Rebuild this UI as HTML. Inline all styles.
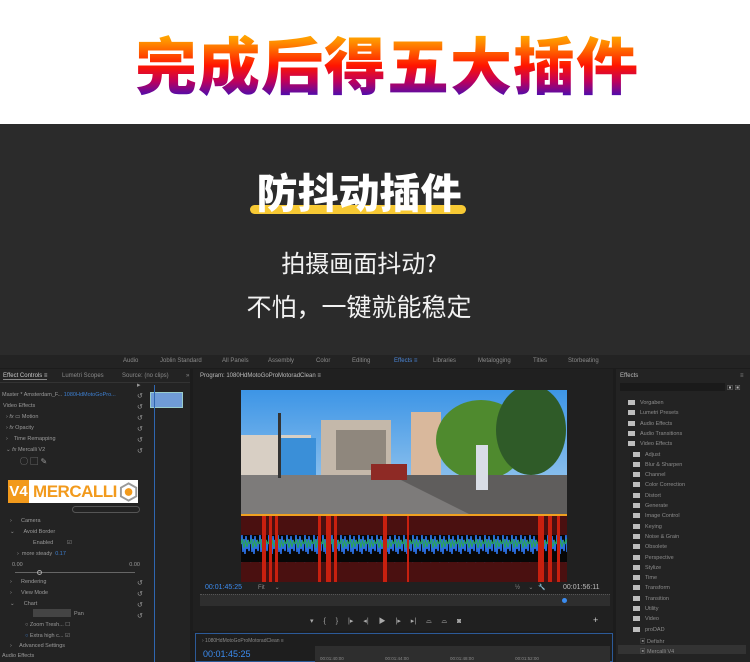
<!DOCTYPE html>
<html><head><meta charset="utf-8">
<style>
*{margin:0;padding:0;box-sizing:border-box}
body{width:750px;height:662px;overflow:hidden;background:#fff;font-family:"Liberation Sans","Noto Sans CJK SC",sans-serif;position:relative}
.abs{position:absolute}
#title{left:12px;width:750px;top:24px;text-align:center;font:900 62px/76px "Noto Sans CJK SC",sans-serif;letter-spacing:1px;background:linear-gradient(180deg,#ffd400 0%,#ff8a00 25%,#ff1500 55%,#c0005a 75%,#2a10c8 100%);-webkit-background-clip:text;background-clip:text;color:transparent}
#dark{left:0;top:124px;width:750px;height:232px;background:#2b2b2b}
.sub{left:-16px;width:750px;text-align:center;color:#f2f2f2;font-family:"Noto Sans CJK SC",sans-serif}
#pr{left:0;top:355px;width:750px;height:307px;background:#1c1c1c;font-size:6px;color:#8a8a8a}
.t{position:absolute;white-space:nowrap}
.pane{position:absolute;background:#232323}
.row{position:absolute;left:6px;font-size:5.5px;color:#9a9a9a;white-space:nowrap}
.fold{position:absolute;left:18px;font-size:5.5px;color:#8c8c8c;white-space:nowrap}
.fold i{display:inline-block;width:7px;height:5px;background:#bdbdbd;margin-right:5px;vertical-align:middle}
</style></head><body>
<div id="title" class="abs">完成后得五大插件</div>
<div id="dark" class="abs"></div>
<div class="abs" style="left:250px;top:205px;width:216px;height:9px;background:#f7c934;border-radius:5px"></div>
<div class="abs sub" style="top:164px;font-size:41px;line-height:52px;font-weight:900;color:#fff">防抖动插件</div>
<div class="abs sub" style="top:246px;font-size:24px;line-height:32px">拍摄画面抖动?</div>
<div class="abs sub" style="top:289px;font-size:25px;line-height:34px">不怕，一键就能稳定</div>

<div id="pr" class="abs">
  <div class="abs" style="left:0;top:0;width:750px;height:13px;background:#232323"></div>
  <div class="t" style="top:3px;left:123px">Audio</div>
  <div class="t" style="top:3px;left:160px">Joblin Standard</div>
  <div class="t" style="top:3px;left:222px">All Panels</div>
  <div class="t" style="top:3px;left:268px">Assembly</div>
  <div class="t" style="top:3px;left:316px">Color</div>
  <div class="t" style="top:3px;left:352px">Editing</div>
  <div class="t" style="top:3px;left:394px;color:#4a86d8">Effects ≡</div>
  <div class="t" style="top:3px;left:433px">Libraries</div>
  <div class="t" style="top:3px;left:478px">Metalogging</div>
  <div class="t" style="top:3px;left:533px">Titles</div>
  <div class="t" style="top:3px;left:568px">Storbeating</div>

  <div class="pane" style="left:0;top:14px;width:190px;height:293px"></div>
  <div class="t" style="left:3px;top:18px;color:#c8c8c8;border-bottom:1px solid #888">Effect Controls ≡</div>
  <div class="t" style="left:62px;top:18px">Lumetri Scopes</div>
  <div class="t" style="left:122px;top:18px">Source: (no clips)</div>
  <div class="t" style="left:186px;top:18px">»</div>
  <div class="abs" style="left:0;top:27px;width:190px;height:1px;background:#333"></div>
  <div class="row" style="left:2px;top:37px">Master * Amsterdam_F... <span style="color:#3d7fd0">1080HdMotoGoPro...</span></div>
  <div class="abs" style="left:150px;top:37px;width:33px;height:16px;background:#6f9bd6;border:1px solid #9cc"></div>
  <div class="row" style="left:3px;top:48px">Video Effects</div>
  <div class="row" style="top:59px">› <i>fx</i> ▭ Motion</div>
  <div class="row" style="top:70px">› <i>fx</i> Opacity</div>
  <div class="row" style="top:81px">› &nbsp;&nbsp; Time Remapping</div>
  <div class="row" style="top:92px">⌄ <i>fx</i> Mercalli V2</div>
  <div class="row" style="left:20px;top:101px;font-size:8px">◯ ▢ ✎</div>
  <div class="abs" style="left:8px;top:125px;width:130px;height:23px;background:#fff;display:flex;align-items:center">
    <div style="width:22px;height:23px;background:#f29a1c;color:#fff;font:bold 15px/23px 'Liberation Sans';text-align:center">V4</div>
    <div style="color:#f29a1c;font:bold 17px/23px 'Liberation Sans';margin-left:4px;letter-spacing:-0.5px">MERCALLI</div>
    <svg width="20" height="20" viewBox="0 0 20 20" style="margin-left:2px"><polygon points="10,1 18,5.5 18,14.5 10,19 2,14.5 2,5.5" fill="none" stroke="#999" stroke-width="2"/><circle cx="10" cy="10" r="4" fill="#f29a1c"/></svg>
  </div>
  <div class="abs" style="left:72px;top:151px;width:68px;height:7px;border:1px solid #555;border-radius:4px"></div>
  <div class="row" style="left:10px;top:163px">›&nbsp;&nbsp;&nbsp;&nbsp;&nbsp; Camera</div>
  <div class="row" style="left:10px;top:174px">⌄&nbsp;&nbsp;&nbsp;&nbsp;&nbsp; Avoid Border</div>
  <div class="row" style="left:33px;top:185px">Enabled &nbsp;&nbsp;&nbsp;&nbsp;&nbsp;&nbsp;&nbsp; ☑</div>
  <div class="row" style="left:17px;top:196px">› &nbsp;more steady &nbsp;<span style="color:#3d7fd0">0.17</span></div>
  <div class="row" style="left:12px;top:207px">0.00 <span style="margin-left:105px">0.00</span></div>
  <div class="abs" style="left:15px;top:217px;width:120px;height:1px;background:#666"></div>
  <div class="abs" style="left:37px;top:215px;width:5px;height:5px;border-radius:50%;border:1px solid #aaa"></div>
  <div class="row" style="left:10px;top:224px">›&nbsp;&nbsp;&nbsp;&nbsp;&nbsp; Rendering</div>
  <div class="row" style="left:10px;top:235px">›&nbsp;&nbsp;&nbsp;&nbsp;&nbsp; View Mode</div>
  <div class="row" style="left:10px;top:246px">⌄&nbsp;&nbsp;&nbsp;&nbsp;&nbsp; Chart</div>
  <div class="abs" style="left:33px;top:254px;width:38px;height:8px;background:#444"></div>
  <div class="row" style="left:74px;top:256px">Pan</div>
  <div class="row" style="left:25px;top:267px">○ Zoom Tresh... ☐</div>
  <div class="row" style="left:25px;top:278px"><span style="color:#3d7fd0">○</span> Extra high c... ☑</div>
  <div class="row" style="left:10px;top:288px">›&nbsp;&nbsp;&nbsp;&nbsp; Advanced Settings</div>
  <div class="row" style="left:2px;top:298px">Audio Effects</div>
  <div class="abs" style="left:137px;top:25px;width:8px;height:275px;color:#999;font-size:7px;line-height:11px">▸<br>↺<br>↺<br>↺<br>↺<br>↺<br>↺<br><br><br><br><br><br><br><br><br><br><br><br>↺<br>↺<br>↺<br>↺</div>
  <div class="abs" style="left:154px;top:30px;width:1px;height:277px;background:#2f66b0"></div>

  <div class="pane" style="left:193px;top:14px;width:420px;height:262px;background:#202020"></div>
  <div class="t" style="left:200px;top:18px;color:#bbb">Program: 1080HdMotoGoProMotoradClean ≡</div>
  <svg class="abs" style="left:241px;top:35px" width="326" height="192" viewBox="0 0 326 192">
    <defs><linearGradient id="sky" x1="0" y1="0" x2="0" y2="1"><stop offset="0" stop-color="#3d95e6"/><stop offset="1" stop-color="#a9d0ef"/></linearGradient>
    <pattern id="wv" width="9" height="28" patternUnits="userSpaceOnUse"><path d="M0 14 L1 5 L2 22 L3 9 L4 24 L5 6 L6 19 L7 10 L8 21 L9 14" stroke="#2a6ee0" stroke-width="1.6" fill="none"/><path d="M0 14 L1.5 9 L3 18 L4.5 10 L6 17 L7.5 11 L9 14" stroke="#2aa35a" stroke-width="1.1" fill="none"/></pattern></defs>
    <rect width="326" height="125" fill="url(#sky)"/>
    <rect x="0" y="45" width="70" height="55" fill="#d8cfc4"/>
    <rect x="40" y="48" width="35" height="45" fill="#3a8fd8"/>
    <rect x="80" y="30" width="70" height="60" fill="#c4b8aa"/>
    <rect x="95" y="40" width="50" height="40" fill="#5a5550" opacity=".5"/>
    <rect x="170" y="22" width="30" height="70" fill="#d9b89c"/>
    <ellipse cx="240" cy="50" rx="45" ry="40" fill="#4f8a2e"/>
    <ellipse cx="290" cy="40" rx="35" ry="45" fill="#2f5b28"/>
    <rect x="0" y="85" width="326" height="40" fill="#7d7b7a"/>
    <polygon points="150,85 326,85 326,125 230,125" fill="#5f5d5c"/>
    <rect x="130" y="74" width="36" height="16" fill="#8e2a25"/>
    <rect x="235" y="55" width="12" height="45" fill="#d9dde6"/>
    <rect x="37" y="23" width="3" height="65" fill="#333"/>
    <rect x="0" y="124" width="326" height="2" fill="#f0a020"/>
    <rect x="0" y="126" width="326" height="66" fill="#4a1010"/>
    <rect x="0" y="145" width="326" height="27" fill="#070707"/>
    <rect x="0" y="145" width="326" height="28" fill="url(#wv)"/>
    <g fill="#c8200f">
      <rect x="21" y="126" width="4" height="66"/><rect x="28" y="126" width="3" height="66"/><rect x="34" y="126" width="3" height="66"/>
      <rect x="77" y="126" width="3" height="66"/><rect x="85" y="126" width="5" height="66"/><rect x="93" y="126" width="3" height="66"/>
      <rect x="142" y="126" width="4" height="66"/><rect x="166" y="126" width="2" height="66"/>
      <rect x="297" y="126" width="6" height="66"/><rect x="307" y="126" width="4" height="66"/><rect x="316" y="126" width="3" height="66"/>
    </g>
  </svg>
  <div class="t" style="left:205px;top:229px;color:#3b8cf0;font-size:7px">00:01:45:25</div>
  <div class="t" style="left:258px;top:229px">Fit &nbsp;&nbsp;&nbsp;&nbsp; ⌄</div>
  <div class="t" style="left:515px;top:229px">½ &nbsp;&nbsp;&nbsp; ⌄ &nbsp; 🔧</div>
  <div class="t" style="left:563px;top:229px;color:#bbb;font-size:7px">00:01:56:11</div>
  <div class="abs" style="left:200px;top:239px;width:410px;height:12px;background:#2e2e2e;border-top:1px dotted #555"></div>
  <div class="abs" style="left:562px;top:243px;width:5px;height:5px;background:#3b8cf0;border-radius:50%"></div>
  <div class="t" style="left:310px;top:261px;color:#aaa;font-size:7px;word-spacing:8px">▾ { } |▸ ◂| ▶ |▸ ▸| ⌓ ⌓ ◙</div>
  <div class="t" style="left:593px;top:260px;color:#ccc;font-size:9px">+</div>
  <div class="abs" style="left:195px;top:278px;width:418px;height:29px;border:1px solid #2c5a98;background:#1e1e1e"></div>
  <div class="t" style="left:202px;top:283px;font-size:5px">› 1080HdMotoGoProMotoradClean ≡</div>
  <div class="t" style="left:203px;top:294px;color:#3b8cf0;font-size:9px">00:01:45:25</div>
  <div class="abs" style="left:315px;top:291px;width:295px;height:16px;background:#2e2e2e"></div>
  <div class="t" style="left:320px;top:301px;font-size:4.5px;word-spacing:40px">00:01:40:00 00:01:44:00 00:01:48:00 00:01:52:00</div>

  <div class="pane" style="left:616px;top:14px;width:134px;height:293px"></div>
  <div class="t" style="left:620px;top:18px;color:#bbb">Effects</div>
  <div class="t" style="left:740px;top:18px">≡</div>
  <div class="abs" style="left:620px;top:28px;width:105px;height:8px;background:#1a1a1a"></div>
  <div class="t" style="left:727px;top:28px;color:#bbb">▣ ▣</div>
  <div class="fold" style="left:628px;top:45px"><i></i>Vorgaben</div>
  <div class="fold" style="left:628px;top:55px"><i></i>Lumetri Presets</div>
  <div class="fold" style="left:628px;top:66px"><i></i>Audio Effects</div>
  <div class="fold" style="left:628px;top:76px"><i></i>Audio Transitions</div>
  <div class="fold" style="left:628px;top:86px"><i></i>Video Effects</div>
  <div class="fold" style="left:633px;top:97px"><i></i>Adjust</div>
  <div class="fold" style="left:633px;top:107px"><i></i>Blur &amp; Sharpen</div>
  <div class="fold" style="left:633px;top:117px"><i></i>Channel</div>
  <div class="fold" style="left:633px;top:127px"><i></i>Color Correction</div>
  <div class="fold" style="left:633px;top:138px"><i></i>Distort</div>
  <div class="fold" style="left:633px;top:148px"><i></i>Generate</div>
  <div class="fold" style="left:633px;top:158px"><i></i>Image Control</div>
  <div class="fold" style="left:633px;top:169px"><i></i>Keying</div>
  <div class="fold" style="left:633px;top:179px"><i></i>Noise &amp; Grain</div>
  <div class="fold" style="left:633px;top:189px"><i></i>Obsolete</div>
  <div class="fold" style="left:633px;top:200px"><i></i>Perspective</div>
  <div class="fold" style="left:633px;top:210px"><i></i>Stylize</div>
  <div class="fold" style="left:633px;top:220px"><i></i>Time</div>
  <div class="fold" style="left:633px;top:230px"><i></i>Transform</div>
  <div class="fold" style="left:633px;top:241px"><i></i>Transition</div>
  <div class="fold" style="left:633px;top:251px"><i></i>Utility</div>
  <div class="fold" style="left:633px;top:261px"><i></i>Video</div>
  <div class="fold" style="left:633px;top:272px"><i></i>proDAD</div>
  <div class="fold" style="left:640px;top:282px">▣ Defishr</div>
  <div class="abs" style="left:618px;top:290px;width:128px;height:9px;background:#333"></div>
  <div class="fold" style="left:640px;top:292px">▣ Mercalli V4</div>
</div>
</body></html>
